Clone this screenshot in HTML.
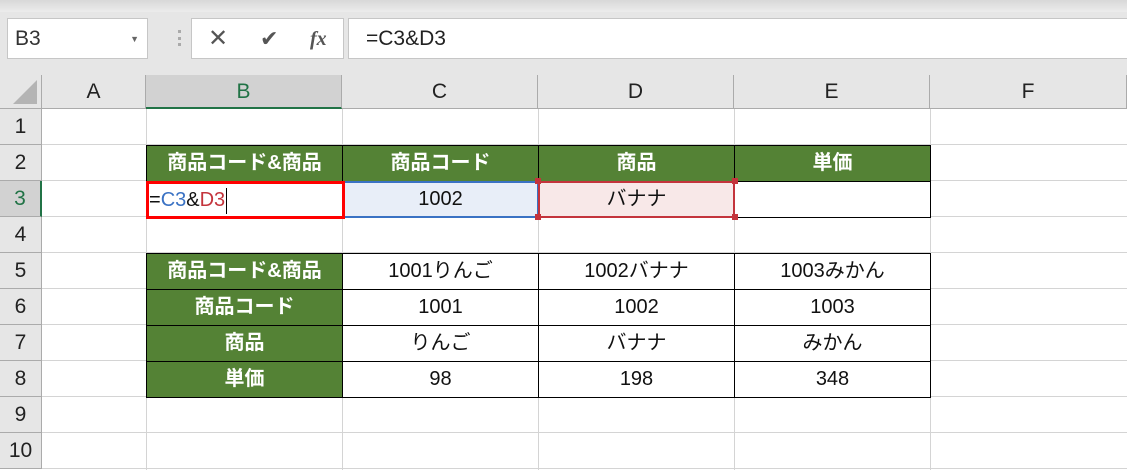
<!DOCTYPE html>
<html><head><meta charset="utf-8"><style>
*{margin:0;padding:0;box-sizing:border-box}
body{width:1127px;height:470px;background:#e6e6e6;position:relative;overflow:hidden;font-family:"Liberation Sans","Noto Sans CJK JP",sans-serif}
.a{position:absolute}
.box{background:#fff;border:1px solid #c6c6c6}
.ch{position:absolute;top:75px;height:34px;border-right:1px solid #ababab;border-bottom:1px solid #ababab;background:#e6e6e6;font-size:21px;color:#222;text-align:center;line-height:34px}
.rh{position:absolute;left:0;width:42px;border-bottom:1px solid #ababab;border-right:1px solid #ababab;background:#e6e6e6;font-size:21px;color:#222;text-align:center;line-height:35px;height:36px}
.c{position:absolute;height:36px;text-align:center;line-height:35px;font-size:20px;color:#111}
.g{background:#548235;color:#fff;font-weight:bold;border:1px solid #000}
.w{background:#fff;border:1px solid #000}
</style></head><body>
<div class="a" style="left:0;top:0;width:1127px;height:12px;background:linear-gradient(#d8d8d8,#ececec)"></div>
<div class="a box" style="left:7px;top:18px;width:141px;height:41px;font-size:21px;line-height:40px;padding-left:7px;color:#333">B3<span style="position:absolute;right:8px;top:0;font-size:9px;color:#666">▼</span></div>
<div class="a" style="left:178px;top:30px;width:3px;height:16px;border-left:3px dotted #aaa"></div>
<div class="a box" style="left:191px;top:18px;width:153px;height:41px;font-size:22px;color:#555;line-height:40px">
<span style="position:absolute;left:16px;font-size:24px">✕</span><span style="position:absolute;left:68px">✔</span><span style="position:absolute;left:118px;font-family:'Liberation Serif',serif;font-style:italic;font-size:20px;font-weight:bold">fx</span></div>
<div class="a box" style="left:348px;top:18px;width:790px;height:41px;font-size:21px;line-height:40px;padding-left:17px;color:#222">=C3&amp;D3</div>
<div class="a" style="left:0;top:109px;width:1127px;height:361px;background:#fff"></div>
<svg class="a" style="left:0;top:109px" width="1127" height="361">
<g stroke="#d4d4d4" stroke-width="1">
<line x1="146.5" y1="0" x2="146.5" y2="361"/><line x1="342.5" y1="0" x2="342.5" y2="361"/><line x1="538.5" y1="0" x2="538.5" y2="361"/><line x1="734.5" y1="0" x2="734.5" y2="361"/><line x1="930.5" y1="0" x2="930.5" y2="361"/>
<line x1="42" y1="35.5" x2="1127" y2="35.5"/><line x1="42" y1="71.5" x2="1127" y2="71.5"/><line x1="42" y1="107.5" x2="1127" y2="107.5"/><line x1="42" y1="143.5" x2="1127" y2="143.5"/><line x1="42" y1="179.5" x2="1127" y2="179.5"/><line x1="42" y1="215.5" x2="1127" y2="215.5"/><line x1="42" y1="251.5" x2="1127" y2="251.5"/><line x1="42" y1="287.5" x2="1127" y2="287.5"/><line x1="42" y1="323.5" x2="1127" y2="323.5"/><line x1="42" y1="359.5" x2="1127" y2="359.5"/>
</g></svg>
<div class="a" style="left:0;top:75px;width:42px;height:34px;border-right:1px solid #ababab;border-bottom:1px solid #ababab"><div style="position:absolute;right:4px;bottom:4px;width:0;height:0;border-left:24px solid transparent;border-bottom:24px solid #b4b4b4"></div></div>
<div class="ch" style="left:42px;width:104px">A</div>
<div class="ch" style="left:146px;width:196px;background:#d2d2d2;color:#217346;border-bottom:2px solid #217346">B</div>
<div class="ch" style="left:342px;width:196px">C</div>
<div class="ch" style="left:538px;width:196px">D</div>
<div class="ch" style="left:734px;width:196px">E</div>
<div class="ch" style="left:930px;width:197px">F</div>
<div class="rh" style="top:109px">1</div>
<div class="rh" style="top:145px">2</div>
<div class="rh" style="top:181px;background:#d2d2d2;color:#217346;border-right:2px solid #217346">3</div>
<div class="rh" style="top:217px">4</div>
<div class="rh" style="top:253px">5</div>
<div class="rh" style="top:289px">6</div>
<div class="rh" style="top:325px">7</div>
<div class="rh" style="top:361px">8</div>
<div class="rh" style="top:397px">9</div>
<div class="rh" style="top:433px">10</div>
<div class="c g" style="left:146px;top:145px;width:197px;height:37px">商品コード&amp;商品</div>
<div class="c g" style="left:342px;top:145px;width:197px;height:37px">商品コード</div>
<div class="c g" style="left:538px;top:145px;width:197px;height:37px">商品</div>
<div class="c g" style="left:734px;top:145px;width:197px;height:37px">単価</div>
<div class="c w" style="left:734px;top:181px;width:197px;height:37px"></div>
<div class="c" style="left:342px;top:181px;width:197px;height:37px;background:#e8eef8;border:2px solid #3a72c4;line-height:33px">1002</div>
<div class="c" style="left:538px;top:181px;width:197px;height:37px;background:#f8e8e8;border:2px solid #c4343c;line-height:33px">バナナ</div>
<div class="a" style="left:535px;top:178px;width:6px;height:6px;background:#c4343c"></div>
<div class="a" style="left:732px;top:178px;width:6px;height:6px;background:#c4343c"></div>
<div class="a" style="left:535px;top:214px;width:6px;height:6px;background:#c4343c"></div>
<div class="a" style="left:732px;top:214px;width:6px;height:6px;background:#c4343c"></div>
<div class="c" style="left:146px;top:181px;width:199px;height:38px;background:#fff;border:3px solid #ff0000;text-align:left;line-height:32px;padding-left:0"><span>=</span><span style="color:#3a72c4">C3</span><span>&amp;</span><span style="color:#c4343c">D3</span><span style="display:inline-block;width:1px;height:26px;background:#000;vertical-align:middle;margin-left:1px"></span></div>
<div class="c g" style="left:146px;top:253px;width:197px;height:37px">商品コード&amp;商品</div>
<div class="c g" style="left:146px;top:289px;width:197px;height:37px">商品コード</div>
<div class="c g" style="left:146px;top:325px;width:197px;height:37px">商品</div>
<div class="c g" style="left:146px;top:361px;width:197px;height:37px">単価</div>
<div class="c w" style="left:342px;top:253px;width:197px;height:37px">1001りんご</div>
<div class="c w" style="left:538px;top:253px;width:197px;height:37px">1002バナナ</div>
<div class="c w" style="left:734px;top:253px;width:197px;height:37px">1003みかん</div>
<div class="c w" style="left:342px;top:289px;width:197px;height:37px">1001</div>
<div class="c w" style="left:538px;top:289px;width:197px;height:37px">1002</div>
<div class="c w" style="left:734px;top:289px;width:197px;height:37px">1003</div>
<div class="c w" style="left:342px;top:325px;width:197px;height:37px">りんご</div>
<div class="c w" style="left:538px;top:325px;width:197px;height:37px">バナナ</div>
<div class="c w" style="left:734px;top:325px;width:197px;height:37px">みかん</div>
<div class="c w" style="left:342px;top:361px;width:197px;height:37px">98</div>
<div class="c w" style="left:538px;top:361px;width:197px;height:37px">198</div>
<div class="c w" style="left:734px;top:361px;width:197px;height:37px">348</div>
</body></html>
